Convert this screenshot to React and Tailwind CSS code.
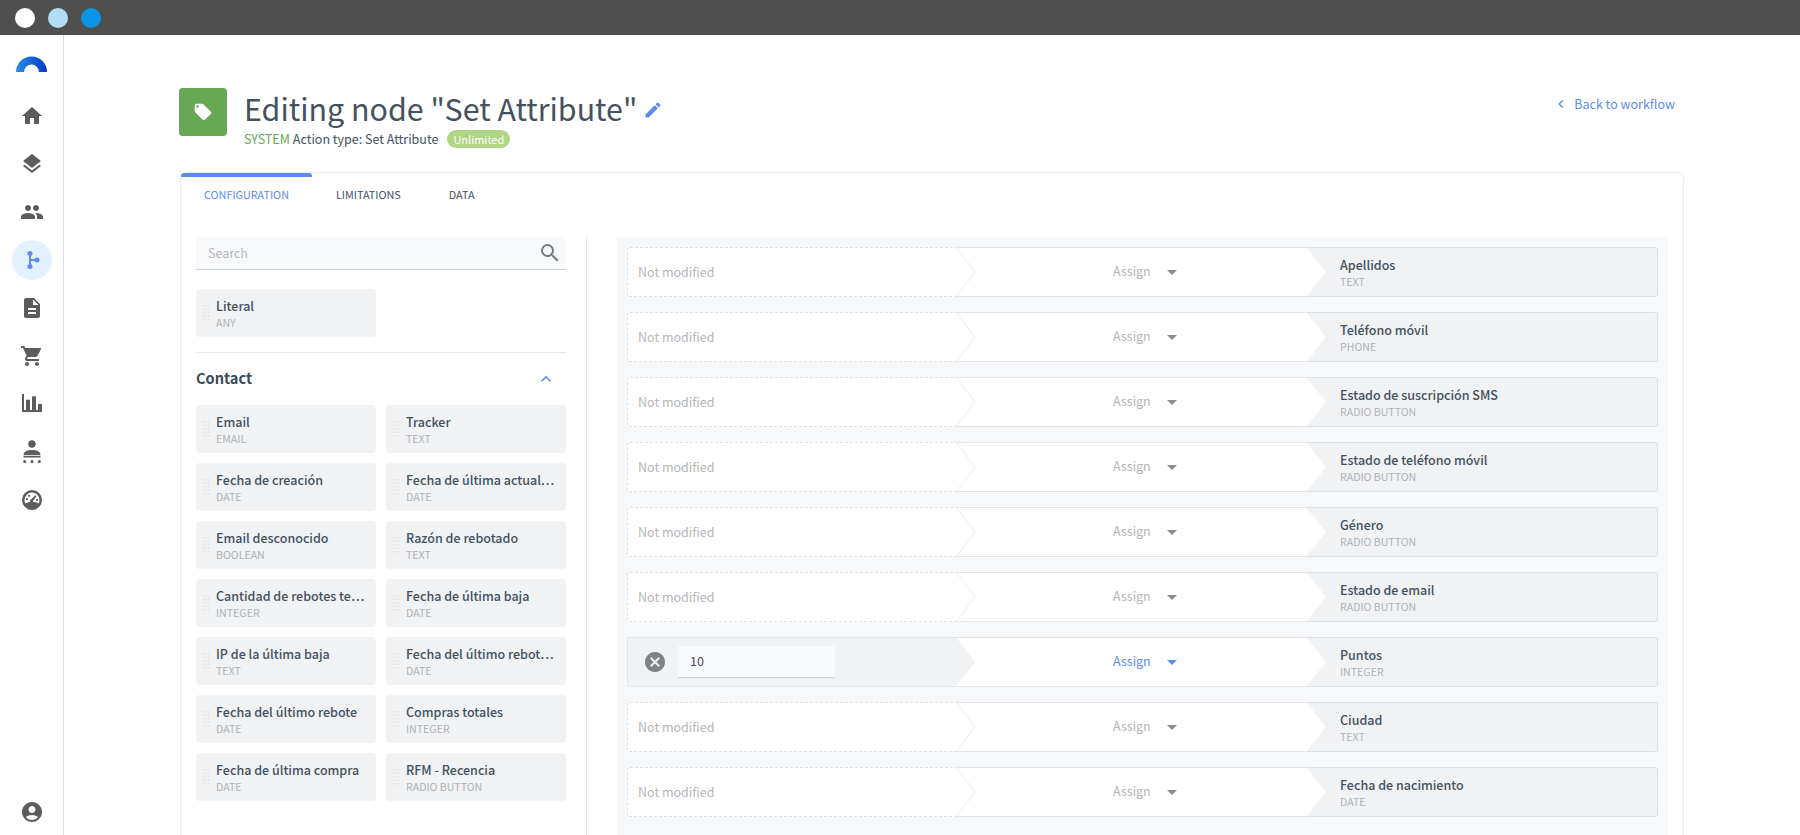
import React from 'react';
import {
  MdHome, MdLayers, MdPeople, MdDescription, MdShoppingCart, MdAccountCircle,
  MdLocalOffer, MdEdit, MdSearch, MdCancel, MdArrowDropDown, MdKeyboardArrowUp, MdChevronLeft,
} from 'react-icons/md';

const contactLeft = [
  ['Email', 'EMAIL'],
  ['Fecha de creación', 'DATE'],
  ['Email desconocido', 'BOOLEAN'],
  ['Cantidad de rebotes te…', 'INTEGER'],
  ['IP de la última baja', 'TEXT'],
  ['Fecha del último rebote', 'DATE'],
  ['Fecha de última compra', 'DATE'],
];

const contactRight = [
  ['Tracker', 'TEXT'],
  ['Fecha de última actual…', 'DATE'],
  ['Razón de rebotado', 'TEXT'],
  ['Fecha de última baja', 'DATE'],
  ['Fecha del último rebot…', 'DATE'],
  ['Compras totales', 'INTEGER'],
  ['RFM - Recencia', 'RADIO BUTTON'],
];

const rows = [
  ['Apellidos', 'TEXT'],
  ['Teléfono móvil', 'PHONE'],
  ['Estado de suscripción SMS', 'RADIO BUTTON'],
  ['Estado de teléfono móvil', 'RADIO BUTTON'],
  ['Género', 'RADIO BUTTON'],
  ['Estado de email', 'RADIO BUTTON'],
  ['Puntos', 'INTEGER', true],
  ['Ciudad', 'TEXT'],
  ['Fecha de nacimiento', 'DATE'],
];

function Logo() {
  return (
    <svg width="31" height="16" viewBox="0 0 31 16">
      <defs>
        <linearGradient id="logoGrad" x1="0" x2="1" y1="0" y2="0">
          <stop offset="0" stopColor="#2b8fe8" />
          <stop offset="1" stopColor="#0038c8" />
        </linearGradient>
      </defs>
      <path d="M0 16A15.5 15.5 0 0 1 31 16H23A7.5 7.5 0 0 0 8 16Z" fill="url(#logoGrad)" />
    </svg>
  );
}

function WorkflowIcon() {
  return (
    <svg width="24" height="24" viewBox="0 0 24 24" fill="#5b8dee">
      <circle cx="10" cy="5.5" r="2.5" />
      <circle cx="10" cy="18.5" r="2.5" />
      <circle cx="17" cy="12" r="2.5" />
      <rect x="9" y="5.5" width="2" height="13" />
      <rect x="10" y="11" width="6" height="2" />
    </svg>
  );
}

function BarsIcon() {
  return (
    <svg width="24" height="24" viewBox="0 0 24 24" fill="#5c5c5c">
      <path d="M2 2h2v16h18v2H2z" />
      <rect x="6" y="7.700" width="4" height="10.300" />
      <rect x="12" y="4.300" width="4" height="13.700" />
      <rect x="18" y="12" width="4" height="6" />
    </svg>
  );
}

function PersonDotsIcon() {
  return (
    <svg width="24" height="24" viewBox="0 0 24 24" fill="#5c5c5c">
      <circle cx="12" cy="4" r="3.700" />
      <path d="M3.500 15c0-3.300 3.500-5 8.500-5s8.500 1.700 8.500 5z" />
      <rect x="3.500" y="15.800" width="17" height="1.700" />
      <circle cx="4.700" cy="21.500" r="1.500" />
      <circle cx="12" cy="21.500" r="1.500" />
      <circle cx="19.300" cy="21.500" r="1.500" />
    </svg>
  );
}

function GaugeIcon() {
  return (
    <svg width="20" height="20" viewBox="0 0 24 24" fill="#5c5c5c">
      <path fillRule="evenodd" d="M12 0a12 12 0 1 0 0 24a12 12 0 0 0 0-24zm0 3a9 9 0 0 1 9 9c0 1.500-.4 2.900-1 4.100c-2.200-1-4.900-1.600-8-1.600s-5.800.6-8 1.600A9 9 0 0 1 3 12A9 9 0 0 1 12 3z" />
      <path d="M15.800 6.200l1.700 1-4 5.500a2 2 0 1 1-2.400-1.700z" />
      <circle cx="6" cy="11" r="1.300" />
      <circle cx="8.500" cy="7" r="1.300" />
      <circle cx="18.200" cy="12" r="1.300" />
    </svg>
  );
}

function Grip() {
  const dots = [];
  for (let r = 0; r < 5; r++) {
    for (let c = 0; c < 3; c++) {
      dots.push(<rect key={`${r}-${c}`} x={c * 2.5} y={r * 3.5} width="1.500" height="1.500" fill="#dfe1e4" />);
    }
  }
  return (
    <svg width="7" height="16" viewBox="0 0 7 16" className="shrink-0">
      {dots}
    </svg>
  );
}

function FieldCard({ name, type }) {
  return (
    <div className="flex h-12 w-[180px] items-center rounded bg-[#f1f2f4] pl-[7px]">
      <Grip />
      <div className="ml-[6px] min-w-0">
        <div className="whitespace-nowrap text-[12.5px] leading-[18px] font-medium text-[#44515f]">{name}</div>
        <div className="whitespace-nowrap text-[10.6px] leading-[15px] text-[#b0b2b6]">{type}</div>
      </div>
    </div>
  );
}

function AttrRow({ name, type, active }) {
  return (
    <div className="flex h-[50px] w-[1031px] shrink-0">
      {active ? (
        <div className="relative flex w-[329px] shrink-0 items-center rounded-l-[3px] border-y border-l border-[#e4e5e8] bg-[#f1f2f4] pl-[15px]">
          <MdCancel className="text-[24px] text-[#808285]" />
          <div className="ml-[11px] flex h-8 w-[157px] items-center border-b border-[#cfd2d6] bg-[#f8f9fb] pl-3 text-[12.5px] text-[#44515f]">10</div>
          <svg width="22" height="50" viewBox="0 0 22 50" className="absolute top-[-1px] left-full">
            <path d="M0 0L19 25L0 50Z" fill="#f1f2f4" />
          </svg>
        </div>
      ) : (
        <div className="relative flex w-[329px] shrink-0 items-center rounded-l-[3px] border-y border-l border-dashed border-[#dfe0e3] bg-white pl-[10px] text-[12.5px] text-[#b4b6ba]">
          Not modified
          <svg width="22" height="50" viewBox="0 0 22 50" className="absolute top-[-1px] left-full">
            <path d="M0 0L19 25L0 50" fill="#fff" stroke="#ececee" strokeWidth="1" />
          </svg>
        </div>
      )}
      <div className="flex flex-1 items-center border-y border-[#e4e5e8] bg-white pb-px pl-[157px]">
        <span className={`text-[12.5px] ${active ? 'text-[#5b8dee]' : 'text-[#b4b6ba]'}`}>Assign</span>
        <MdArrowDropDown className={`ml-[9px] text-[24px] ${active ? 'text-[#5b8dee]' : 'text-[#8a8c90]'}`} />
      </div>
      <div className="relative flex w-[352px] shrink-0 items-center rounded-r-[3px] border border-l-0 border-[#dfe0e3] bg-[#f1f2f4] pl-[34px]">
        <svg width="21" height="50" viewBox="0 0 21 50" className="absolute top-[-1px] left-0">
          <path d="M0 0L20 25L0 50Z" fill="#fff" />
        </svg>
        <div>
          <div className="text-[12.5px] leading-[18px] font-medium text-[#44515f]">{name}</div>
          <div className="text-[10.6px] leading-[15px] text-[#b0b2b6]">{type}</div>
        </div>
      </div>
    </div>
  );
}

export default function App() {
  const nav = [
    <MdHome className="text-[24px] text-[#5c5c5c]" />,
    <MdLayers className="text-[24px] text-[#5c5c5c]" />,
    <MdPeople className="text-[24px] text-[#5c5c5c]" />,
    <WorkflowIcon />,
    <MdDescription className="text-[24px] text-[#5c5c5c]" />,
    <MdShoppingCart className="text-[24px] text-[#5c5c5c]" />,
    <BarsIcon />,
    <PersonDotsIcon />,
    <GaugeIcon />,
  ];

  return (
    <div className="flex h-screen flex-col overflow-hidden bg-white font-['Noto_Sans_CJK_JP','Noto_Sans',sans-serif]">
      <div className="flex h-[35px] shrink-0 items-center gap-[13px] bg-[#4f4f4f] pl-[15px]">
        <div className="h-5 w-5 rounded-full bg-white" />
        <div className="h-5 w-5 rounded-full bg-[#b3dcf7]" />
        <div className="h-5 w-5 rounded-full bg-[#0a94e8]" />
      </div>

      <div className="flex min-h-0 flex-1">
        <aside className="flex w-[64px] shrink-0 flex-col items-center border-r border-[#dcdcdc] pt-[21px] pb-[11px]">
          <Logo />
          <div className="mt-[24px] flex flex-col items-center gap-2">
            {nav.map((icon, i) => (
              <div
                key={i}
                className={`flex h-10 w-10 items-center justify-center rounded-full ${i === 3 ? 'bg-[#e3f0fd]' : ''}`}
              >
                {icon}
              </div>
            ))}
          </div>
          <MdAccountCircle className="mt-auto text-[24px] text-[#5c5c5c]" />
        </aside>

        <main className="min-w-0 flex-1 pt-[53px] pl-[115px]">
          <div className="flex h-12 w-[1496px] items-start justify-between">
            <div className="flex">
              <div className="flex h-12 w-12 items-center justify-center rounded bg-[#66a854]">
                <MdLocalOffer className="text-[20px] text-white" />
              </div>
              <div className="ml-[17px]">
                <div className="flex h-[40px] items-center">
                  <h1 className="text-[30.4px] leading-[40px] text-[#44515f]">Editing node "Set Attribute"</h1>
                  <MdEdit className="ml-[6px] mt-[3px] text-[20px] text-[#5b8dee]" />
                </div>
                <div className="flex h-[22px] items-center text-[12.5px] text-[#44515f]">
                  <span className="text-[#66a854]">SYSTEM</span>
                  <span className="ml-[3px]">Action type: Set Attribute</span>
                  <span className="ml-[9px] flex h-[18px] items-center rounded-full bg-[#b0d583] px-[6px] text-[11px] text-white">Unlimited</span>
                </div>
              </div>
            </div>
            <div className="flex h-[32px] items-center text-[12.5px] text-[#5b8dee]">
              <MdChevronLeft className="mr-[5px] text-[16px]" />
              Back to workflow
            </div>
          </div>

          <div className="mt-[36px] ml-px h-[1000px] w-[1504px] rounded-lg border border-[#ececee] shadow-[0_1px_6px_rgba(0,0,0,0.04)]">
            <div className="flex h-[64px] items-start">
              <div className="flex h-[39px] w-[131px] items-center justify-center rounded-t-[3px] border-t-4 border-[#5b8dee] text-[10.8px] text-[#5b8dee]">
                CONFIGURATION
              </div>
              <div className="ml-[24px] flex h-[39px] items-center border-t-4 border-transparent text-[10.8px] text-[#44515f]">LIMITATIONS</div>
              <div className="ml-[48px] flex h-[39px] items-center border-t-4 border-transparent text-[10.8px] text-[#44515f]">DATA</div>
            </div>

            <div className="flex h-[900px] pl-[15px]">
              <div className="w-[370px] shrink-0">
                <div className="flex h-[33px] items-center justify-between border-b border-[#cdd3da] bg-[#f8f9fb] pr-[4px] pl-3 text-[12.5px] text-[#b4b6ba]">
                  Search
                  <MdSearch className="text-[24px] text-[#77797d]" />
                </div>
                <div className="mt-[19px]">
                  <FieldCard name="Literal" type="ANY" />
                </div>
                <div className="mt-[15px] border-t border-[#e6e7ea]" />
                <div className="flex h-[52px] items-center justify-between pr-[10px]">
                  <span className="mb-[2px] text-[14.6px] font-bold text-[#3d4a57]">Contact</span>
                  <MdKeyboardArrowUp className="text-[20px] text-[#5b8dee]" />
                </div>
                <div className="grid grid-cols-2 gap-[10px]">
                  {contactLeft.map((item, i) => (
                    <React.Fragment key={i}>
                      <FieldCard name={item[0]} type={item[1]} />
                      <FieldCard name={contactRight[i][0]} type={contactRight[i][1]} />
                    </React.Fragment>
                  ))}
                </div>
              </div>

              <div className="ml-5 shrink-0 border-l border-[#e6e7ea] pl-[30px]">
                <div className="flex h-full w-[1051px] flex-col gap-[15px] bg-[#f7f8fa] pt-[10px] pl-[10px]">
                  {rows.map((r) => (
                    <AttrRow key={r[0]} name={r[0]} type={r[1]} active={r[2]} />
                  ))}
                </div>
              </div>
            </div>
          </div>
        </main>
      </div>
    </div>
  );
}
